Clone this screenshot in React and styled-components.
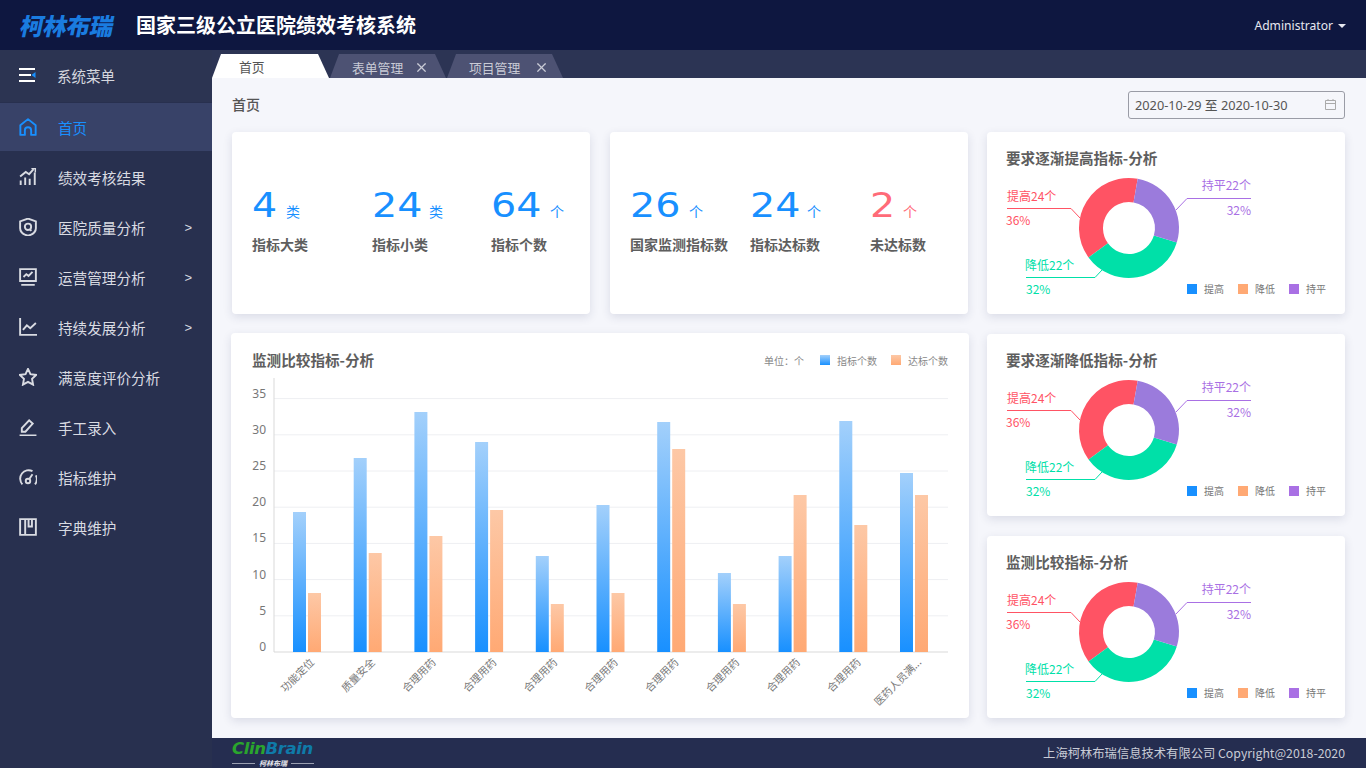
import styled, { createGlobalStyle } from "styled-components";
import { X } from "lucide-react";

const GlobalStyle = createGlobalStyle`
  html, body {
    margin: 0;
    padding: 0;
    height: 100%;
    overflow: hidden;
    font-family: "Noto Sans CJK SC", "Noto Sans", sans-serif;
  }
  * {
    box-sizing: border-box;
  }
`;

const Page = styled.div`
  width: 1366px;
  height: 768px;
  display: flex;
  flex-direction: column;
  background: #28304f;
`;

const Header = styled.header`
  height: 50px;
  flex: none;
  display: flex;
  align-items: center;
  padding: 0 20px 0 21px;
  background: #0e1740;
  color: #fff;
`;

const Logo = styled.div`
  width: 115px;
  font-size: 23.5px;
  line-height: 50px;
  font-weight: 900;
  letter-spacing: -0.3px;
  color: #1a7ce0;
  transform: skewX(-12deg);
`;

const SystemName = styled.h1`
  flex: 1;
  margin: 0;
  font-size: 20px;
  font-weight: 700;
  line-height: 50px;
`;

const UserMenu = styled.div`
  display: flex;
  align-items: center;
  gap: 5px;
  font-family: "Noto Sans", sans-serif;
  font-size: 12.1px;
  color: #e6e8f0;
`;

const Caret = styled.span`
  width: 0;
  height: 0;
  margin-top: 1px;
  border-left: 4.5px solid transparent;
  border-right: 4.5px solid transparent;
  border-top: 4px solid #e6e8f0;
`;

const Body = styled.div`
  flex: 1;
  display: flex;
  min-height: 0;
`;

const Sidebar = styled.nav`
  width: 212px;
  flex: none;
  background: #28304f;
`;

const MenuHead = styled.div`
  height: 52px;
  display: flex;
  align-items: center;
  padding: 0 0 2px 19px;
  gap: 21px;
  margin-bottom: 1px;
  background: #2c3452;
  color: #d4d6de;
  font-size: 14.5px;
`;

const MenuItem = styled.div`
  height: ${(p) => (p.$active ? "48px" : "50px")};
  display: flex;
  align-items: center;
  gap: 21px;
  padding: 0 20px ${(p) => (p.$active ? "0" : "2px")} 19px;
  font-size: 14.6px;
  color: ${(p) => (p.$active ? "#1890ff" : "#d9dbe2")};
  background: ${(p) => (p.$active ? "#384268" : "transparent")};
  margin-bottom: ${(p) => (p.$active ? "2px" : "0")};
`;

const MenuLabel = styled.span`
  flex: 1;
`;

const Arrow = styled.span`
  font-family: "Liberation Sans", sans-serif;
  font-size: 13px;
`;

const Main = styled.div`
  flex: 1;
  min-width: 0;
  display: flex;
  flex-direction: column;
`;

const TabBar = styled.div`
  height: 28px;
  flex: none;
  display: flex;
  align-items: flex-end;
  background: #2c3454;
`;

const Tab = styled.div`
  height: 24px;
  display: flex;
  align-items: center;
  font-size: 12.8px;
  clip-path: polygon(0 100%, 9px 0, calc(100% - 11px) 0, 100% 100%);
  color: ${(p) => (p.$active ? "#555" : "#c9cbd6")};
  background: ${(p) => (p.$active ? "#fff" : "#4d5273")};
  width: ${(p) => (p.$active ? "117px" : "116px")};
  margin-right: 1px;
  padding-left: ${(p) => (p.$active ? "27px" : "22px")};
  padding-top: ${(p) => (p.$active ? "0" : "3px")};
`;

const TabClose = styled(X)`
  margin-left: ${(p) => p.$gap}px;
  color: #c9cbd6;
`;

const Content = styled.main`
  flex: 1;
  min-height: 0;
  padding: 0 21px 0 19px;
  background: #f5f6fb;
`;

const PageHead = styled.div`
  height: 54px;
  display: flex;
  align-items: center;
  justify-content: space-between;
  padding: 0 0 0 1px;
`;

const PageTitle = styled.div`
  font-size: 14px;
  font-weight: 500;
  line-height: 20px;
  margin-top: -2px;
  color: #555;
`;

const DateBox = styled.div`
  width: 217px;
  height: 28px;
  margin-top: -1px;
  display: flex;
  align-items: center;
  justify-content: space-between;
  padding: 0 7px 0 6px;
  border: 1px solid #9a9ca6;
  border-radius: 3px;
  font-family: "Noto Sans", "Noto Sans CJK SC", sans-serif;
  font-size: 12.75px;
  color: #555;
`;

const Grid = styled.div`
  display: grid;
  grid-template-columns: 738px 358px;
  grid-template-rows: 182px 182px 182px;
  column-gap: 18px;
  row-gap: 20px;
`;

const StatRow = styled.div`
  grid-column: 1;
  grid-row: 1;
  display: grid;
  grid-template-columns: 358px 358px;
  justify-content: space-between;
  padding: 0 1px;
`;

const Card = styled.section`
  position: relative;
  background: #fff;
  border-radius: 4px;
  box-shadow: 0 3px 10px rgba(40, 48, 90, 0.13);
`;

const StatCard = styled(Card)`
  display: grid;
  grid-template-columns: ${(p) => p.$columns};
  padding: 54px 0 0 20px;
`;

const Stat = styled.div`
  display: flex;
  flex-direction: column;
`;

const StatValue = styled.div`
  height: 40px;
  display: flex;
  align-items: baseline;
  color: ${(p) => p.$color};
`;

const StatNumber = styled.span`
  font-family: "DejaVu Sans", sans-serif;
  font-size: 33px;
  line-height: 40px;
  transform: scaleX(1.2);
  transform-origin: left center;
  width: ${(p) => p.$width}px;
`;

const StatUnit = styled.span`
  font-size: 14px;
`;

const StatLabel = styled.div`
  margin-top: 8px;
  font-size: 14px;
  font-weight: 700;
  line-height: 20px;
  color: #5e5e5e;
`;

const ChartCard = styled(Card)`
  grid-column: 1;
  grid-row: 2 / span 2;
  margin-top: -1px;
  padding: 17px 21px 0 21px;
`;

const ChartHead = styled.div`
  height: 20px;
  display: flex;
  align-items: center;
  justify-content: space-between;
`;

const CardTitle = styled.h3`
  margin: 0;
  font-size: 14.6px;
  font-weight: 700;
  line-height: 20px;
  color: #5e5e5e;
`;

const ChartLegend = styled.div`
  display: flex;
  align-items: center;
  font-size: 10px;
  color: #888;
`;

const Swatch = styled.span`
  width: 10px;
  height: 10px;
  flex: none;
  background: ${(p) => p.$fill};
`;

const LegendUnit = styled.span`
  margin-right: 16px;
`;

const LegendText = styled.span`
  margin: 0 14px 0 7px;
  &:last-child {
    margin-right: 0;
  }
`;

const ChartSvg = styled.svg`
  display: block;
  margin-left: -21px;
  margin-top: 6px;
`;

const DonutBox = styled(Card)`
  grid-column: 2;
  padding: 16px 19px 0 19px;
`;

const DonutSvg = styled.svg`
  display: block;
  margin: 0 0 0 -19px;
`;

const DonutLegend = styled.div`
  position: absolute;
  right: 19px;
  bottom: 18px;
  display: flex;
  align-items: center;
  font-size: 10px;
  color: #777;
`;

const polar = (r, deg) => {
  const a = ((deg - 90) * Math.PI) / 180;
  return [142 + r * Math.cos(a), 96 + r * Math.sin(a)];
};

const arc = (from, to) => {
  const [x1, y1] = polar(50, from);
  const [x2, y2] = polar(50, to);
  const [x3, y3] = polar(26, to);
  const [x4, y4] = polar(26, from);
  const large = to - from > 180 ? 1 : 0;
  return `M${x1} ${y1}A50 50 0 ${large} 1 ${x2} ${y2}L${x3} ${y3}A26 26 0 ${large} 0 ${x4} ${y4}Z`;
};

const DONUT = [
  { from: -126, to: 10, fill: "#ff5364" },
  { from: 107, to: 234, fill: "#00e0a8" },
  { from: 10, to: 107, fill: "#9b7bdc" },
];

function DonutCard({ title }) {
  return (
    <DonutBox>
      <CardTitle>{title}</CardTitle>
      <DonutSvg width="358" height="145" viewBox="0 36 358 145">
        {DONUT.map((s) => (
          <path key={s.fill} d={arc(s.from, s.to)} fill={s.fill} />
        ))}
        <g fontSize="12" fill="none">
          <path d="M20 76.500H84L93 86" stroke="#ff5364" />
          <path d="M39 145.500H108L115 138" stroke="#00e0a8" />
          <path d="M264 66.500H200L189 78" stroke="#a970e4" />
          <text x="20" y="69" fill="#ff5364">提高24个</text>
          <text x="19" y="93" fill="#ff5364">36%</text>
          <text x="38" y="138" fill="#00e0a8">降低22个</text>
          <text x="39" y="162" fill="#00e0a8">32%</text>
          <text x="264" y="58" fill="#a970e4" textAnchor="end">持平22个</text>
          <text x="264" y="83" fill="#a970e4" textAnchor="end">32%</text>
        </g>
      </DonutSvg>
      <DonutLegend>
        <Swatch $fill="#1890ff" />
        <LegendText>提高</LegendText>
        <Swatch $fill="#ffa974" />
        <LegendText>降低</LegendText>
        <Swatch $fill="#a970e4" />
        <LegendText>持平</LegendText>
      </DonutLegend>
    </DonutBox>
  );
}

const BARS = [
  ["功能定位", 512, 593],
  ["质量安全", 458, 553],
  ["合理用药", 412, 536],
  ["合理用药", 442, 510],
  ["合理用药", 556, 604],
  ["合理用药", 505, 593],
  ["合理用药", 422, 449],
  ["合理用药", 573, 604],
  ["合理用药", 556, 495],
  ["合理用药", 421, 525],
  ["医药人员满...", 473, 495],
];

// picture coordinates of the chart: the svg starts at x=231, y=376
function BarChart() {
  const zeroY = 652 - 376;
  return (
    <ChartSvg width="738" height="340" viewBox="0 0 738 340">
      <defs>
        <linearGradient id="blueBar" x1="0" y1="0" x2="0" y2="1">
          <stop offset="0" stopColor="#a3d0fb" />
          <stop offset="1" stopColor="#1890ff" />
        </linearGradient>
        <linearGradient id="orangeBar" x1="0" y1="0" x2="0" y2="1">
          <stop offset="0" stopColor="#fdc8a6" />
          <stop offset="1" stopColor="#ffa974" />
        </linearGradient>
      </defs>
      {[1, 2, 3, 4, 5, 6, 7].map((n) => (
        <line key={n} x1="43" x2="717" y1={zeroY - n * 36.2} y2={zeroY - n * 36.2} stroke="#eeeff2" />
      ))}
      <path d={`M43 2V${zeroY}H717`} fill="none" stroke="#d9d9d9" />
      {[0, 1, 2, 3, 4, 5, 6, 7].map((n) => (
        <text key={n} x="35" y={zeroY - n * 36.2 - 1} textAnchor="end" fontSize="12" fill="#777" fontFamily="Noto Sans">
          {n * 5}
        </text>
      ))}
      {BARS.map(([label, blue, orange], i) => {
        const x = 62 + i * 60.7;
        return (
          <g key={i}>
            <rect x={x} y={blue - 376} width="13" height={652 - blue} fill="url(#blueBar)" />
            <rect x={x + 15} y={orange - 376} width="13" height={652 - orange} fill="url(#orangeBar)" />
            <text
              transform={`translate(${x + 22} ${zeroY + 11}) rotate(-45)`}
              textAnchor="end"
              fontSize="10.5"
              fill="#777"
            >
              {label}
            </text>
          </g>
        );
      })}
    </ChartSvg>
  );
}

const Footer = styled.footer`
  height: 30px;
  flex: none;
  display: flex;
  align-items: center;
  justify-content: space-between;
  padding: 0 21px 0 20px;
  background: #252d50;
  color: #c9ccd6;
  font-size: 12.3px;
`;

const BrandBlock = styled.div`
  width: 82px;
  margin-top: 1px;
  display: flex;
  flex-direction: column;
`;

const BrandName = styled.div`
  font-family: "DejaVu Sans", sans-serif;
  font-size: 16.5px;
  font-weight: 700;
  font-style: italic;
  line-height: 17px;
  letter-spacing: -0.4px;
  color: #0f7aa8;
`;

const BrandGreen = styled.span`
  color: #2aa52d;
`;

const BrandSub = styled.div`
  display: flex;
  align-items: center;
  gap: 4px;
  margin-top: 3px;
  font-size: 7px;
  line-height: 7px;
  font-weight: 700;
  font-style: italic;
  color: #e8e8ee;
  &::before,
  &::after {
    content: "";
    flex: 1;
    height: 1px;
    background: #9ba0b2;
  }
`;

const MENU_ICON = { width: 18, height: 18, viewBox: "1 1 16 16", fill: "none", stroke: "currentColor", strokeWidth: 1.7 };

const icons = {
  home: (
    <svg {...MENU_ICON}>
      <path d="M2.200 7.500 9 2l6.800 5.500V16h-4v-4a2.800 2.800 0 0 0-5.600 0v4h-4z" strokeLinejoin="round" />
    </svg>
  ),
  bars: (
    <svg {...MENU_ICON}>
      <path d="M2.500 16v-4M6.500 16V9.500M10.500 16v-5.500M15 16V5M2 8.500 7 4.500l3 2L14 2" />
      <path d="M12 1.500h3.500V5" strokeWidth="1.300" />
    </svg>
  ),
  shield: (
    <svg {...MENU_ICON}>
      <path d="M9 1.500 16 4v6c0 3.500-3.500 5.800-7 6.800C5.500 15.800 2 13.500 2 10V4z" />
      <circle cx="9" cy="8.800" r="2.800" />
      <path d="m10.500 11 1.500 1.500" />
    </svg>
  ),
  monitor: (
    <svg {...MENU_ICON}>
      <path d="M2 2h14v10.500H2zM3 16h12M5 9l2.500-2.500L9.500 8 13 4.500" />
    </svg>
  ),
  trend: (
    <svg {...MENU_ICON}>
      <path d="M2 1v15h15M4.500 11.500 8 7.500l3 2.500 5-4.500" />
    </svg>
  ),
  star: (
    <svg {...MENU_ICON}>
      <path d="m9 1.800 2.200 4.700 5.100.7-3.700 3.500.9 5.100L9 13.300l-4.500 2.500.9-5.100L1.700 7.200l5.100-.7z" />
    </svg>
  ),
  pen: (
    <svg {...MENU_ICON}>
      <path d="M1.500 16.500h15M3.500 13.200V10L10 3l3.200 3-6.500 7.200z" />
    </svg>
  ),
  gauge: (
    <svg {...MENU_ICON}>
      <path d="M4 15.500A7.500 7.500 0 0 1 13 3.800M16 7.500a7.500 7.500 0 0 1-.8 8" />
      <circle cx="9" cy="12.500" r="2" />
      <path d="m10 11 3-4.500" />
    </svg>
  ),
  book: (
    <svg {...MENU_ICON}>
      <path d="M2 2h14v14H2zM6.500 2v14M6.500 2h6v6.500h-3V2" />
    </svg>
  ),
};

const MENU = [
  { icon: "bars", label: "绩效考核结果" },
  { icon: "shield", label: "医院质量分析", more: true },
  { icon: "monitor", label: "运营管理分析", more: true },
  { icon: "trend", label: "持续发展分析", more: true },
  { icon: "star", label: "满意度评价分析" },
  { icon: "pen", label: "手工录入" },
  { icon: "gauge", label: "指标维护" },
  { icon: "book", label: "字典维护" },
];

const STATS_LEFT = [
  { value: "4", unit: "类", label: "指标大类", width: 34 },
  { value: "24", unit: "类", label: "指标小类", width: 57 },
  { value: "64", unit: "个", label: "指标个数", width: 59 },
];

const STATS_RIGHT = [
  { value: "26", unit: "个", label: "国家监测指标数", width: 59 },
  { value: "24", unit: "个", label: "指标达标数", width: 57 },
  { value: "2", unit: "个", label: "未达标数", width: 33, color: "#ff6b78" },
];

function StatItem({ value, unit, label, width, color = "#1890ff" }) {
  return (
    <Stat>
      <StatValue $color={color}>
        <StatNumber $width={width}>{value}</StatNumber>
        <StatUnit>{unit}</StatUnit>
      </StatValue>
      <StatLabel>{label}</StatLabel>
    </Stat>
  );
}

export default function App() {
  return (
    <Page>
      <GlobalStyle />
      <Header>
        <Logo>柯林布瑞</Logo>
        <SystemName>国家三级公立医院绩效考核系统</SystemName>
        <UserMenu>
          Administrator
          <Caret />
        </UserMenu>
      </Header>
      <Body>
        <Sidebar>
          <MenuHead>
            <svg width="17" height="14" viewBox="0 0 17 14">
              <path d="M0 0h16v2H0zM0 6h12v2H0zM0 12h16v2H0z" fill="#fff" />
              <path d="m16.500 4-4 3 4 3z" fill="#1890ff" />
            </svg>
            系统菜单
          </MenuHead>
          <MenuItem $active>
            {icons.home}
            <MenuLabel>首页</MenuLabel>
          </MenuItem>
          {MENU.map((m) => (
            <MenuItem key={m.label}>
              {icons[m.icon]}
              <MenuLabel>{m.label}</MenuLabel>
              {m.more && <Arrow>&gt;</Arrow>}
            </MenuItem>
          ))}
        </Sidebar>
        <Main>
          <TabBar>
            <Tab $active>首页</Tab>
            <Tab>
              表单管理
              <TabClose size={15} strokeWidth={1.9} $gap={11} />
            </Tab>
            <Tab>
              项目管理
              <TabClose size={15} strokeWidth={1.9} $gap={14} />
            </Tab>
          </TabBar>
          <Content>
            <PageHead>
              <PageTitle>首页</PageTitle>
              <DateBox>
                2020-10-29 至 2020-10-30
                <svg width="13" height="13" viewBox="0 0 13 13" fill="none" stroke="#aaa">
                  <path d="M1.500 2.500h10v9h-10zM1.500 5.500h10M4 1v2M9 1v2" />
                </svg>
              </DateBox>
            </PageHead>
            <Grid>
              <StatRow>
                <StatCard $columns="120px 119px 1fr">
                  {STATS_LEFT.map((s) => (
                    <StatItem key={s.label} {...s} />
                  ))}
                </StatCard>
                <StatCard $columns="120px 120px 1fr">
                  {STATS_RIGHT.map((s) => (
                    <StatItem key={s.label} {...s} />
                  ))}
                </StatCard>
              </StatRow>
              <DonutCard title="要求逐渐提高指标-分析" />
              <ChartCard>
                <ChartHead>
                  <CardTitle>监测比较指标-分析</CardTitle>
                  <ChartLegend>
                    <LegendUnit>单位：个</LegendUnit>
                    <Swatch $fill="linear-gradient(#a3d0fb, #1890ff)" />
                    <LegendText>指标个数</LegendText>
                    <Swatch $fill="linear-gradient(#fdc8a6, #ffa974)" />
                    <LegendText>达标个数</LegendText>
                  </ChartLegend>
                </ChartHead>
                <BarChart />
              </ChartCard>
              <DonutCard title="要求逐渐降低指标-分析" />
              <DonutCard title="监测比较指标-分析" />
            </Grid>
          </Content>
          <Footer>
            <BrandBlock>
              <BrandName>
                <BrandGreen>Clin</BrandGreen>Brain
              </BrandName>
              <BrandSub>柯林布瑞</BrandSub>
            </BrandBlock>
            上海柯林布瑞信息技术有限公司 Copyright@2018-2020
          </Footer>
        </Main>
      </Body>
    </Page>
  );
}
